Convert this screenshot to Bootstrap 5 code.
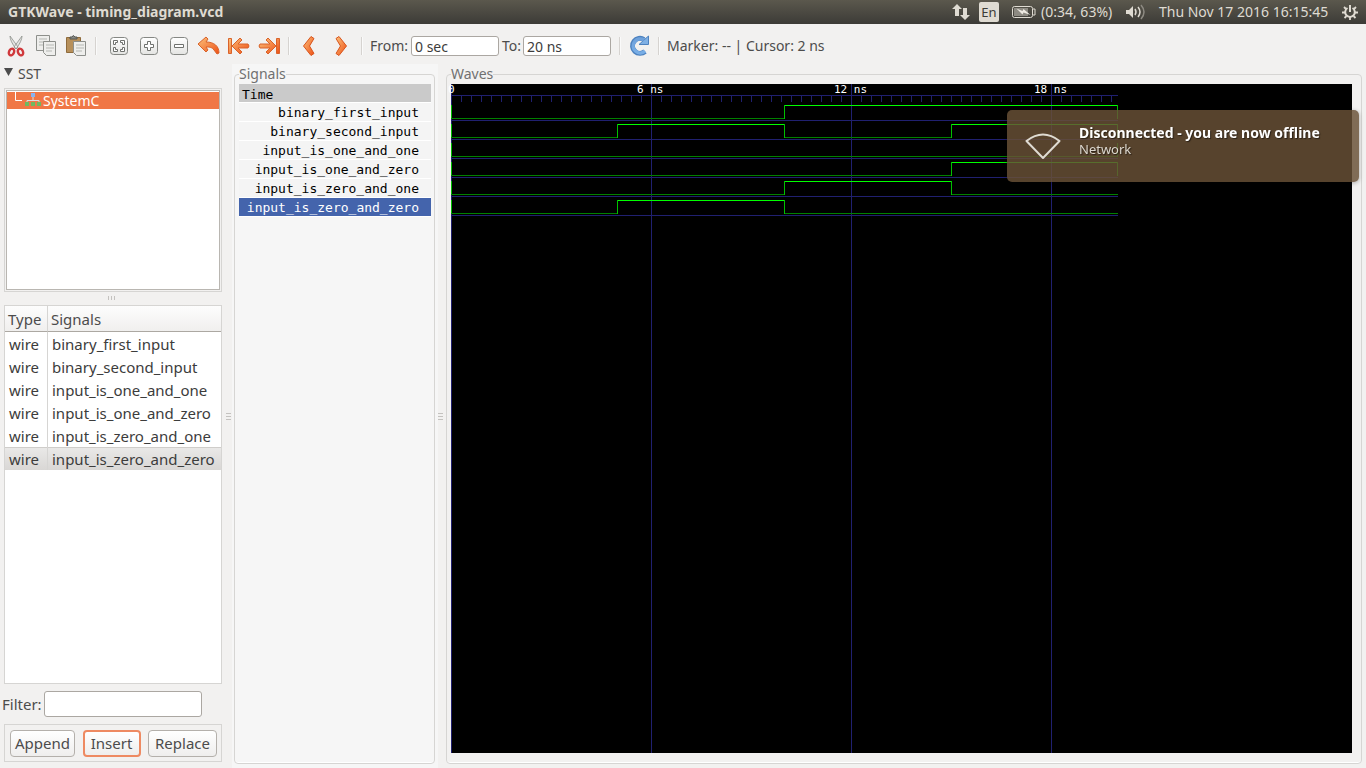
<!DOCTYPE html>
<html lang="en">
<head>
<meta charset="utf-8">
<meta name="viewport" content="width=device-width, initial-scale=1">
<title>GTKWave - timing_diagram.vcd</title>
<link href="https://cdn.jsdelivr.net/npm/bootstrap@5.3.0/dist/css/bootstrap.min.css" rel="stylesheet">
<style>
body{font-family:"Noto Sans","Open Sans",sans-serif;font-size:14px;line-height:20px;color:#4c4c4c;background:#f2f1f0}
svg{display:block;flex:none}
.topbar{height:24px;background:linear-gradient(#5b584d,#3c3b37);color:#dfdbd2}
.topbar h1{font-size:14px;line-height:24px}
.lang{width:20px;height:20px;background:#dfdbd2;color:#3c3b37;border-radius:2px;font-size:13px}
.charge{width:84px}
.clock{width:187px}
.toolbar{height:40px;padding-left:1px;padding-top:3px}
.tool{width:30px;height:30px;padding:0;border:0;background:none;display:flex;align-items:center;justify-content:center}
.tool.wide{width:32px}
.divider{width:1px;height:18px;background:#d6d3d0;box-shadow:1px 0 #fafafa}
.entry{border:1px solid #aba7a2;border-radius:3px;background:#fff;color:#3c3c3c;padding:0 3px;font-size:14px;line-height:18px}
.time-entry{width:88px;height:20px}
.filter-entry{width:158px;height:26px}
.from-label{width:41px}
.to-label{width:24px;padding-left:3px}
.side{width:222px;font-size:15px}
.sst{height:24px;padding-left:4px;gap:5px}
.sst span{font-size:14px}
.frame{border:1px solid #d6d5d3;margin-left:4px}
.tree{height:204px;padding:1px}
.tree-inner{border:1px solid #b9b6b1;background:#fff;padding-top:1px}
.tree-row{height:17px;background:#f07746;color:#fff;line-height:17px;padding-left:7px;font-size:14px}
.grip-h{height:13px}
.grip-v{width:10px;padding-left:4px}
.grip-v.narrow{width:8px;padding-left:0}
.sig-table{width:100%;table-layout:fixed;border-collapse:separate;border-spacing:0}
.sig-table th{height:26px;font-weight:400;padding:1px 3px 0;background:linear-gradient(#fdfdfd,#f0efee);border-bottom:1px solid #aca8a2}
.sig-table td{height:23px;padding:0 4px;color:#3c3c3c;white-space:nowrap}
.sig-table th:first-child,.sig-table td:first-child{width:43px;border-right:1px solid #d6d5d3}
.sig-table .picked td{background:linear-gradient(#eae9e8,#d9d7d5);box-shadow:inset 0 1px #cfcdca}
.filter-row{height:40px;padding-left:2px;gap:2px}
.actions{height:38px;padding:0 4px 0 5px;margin-bottom:6px}
.act{height:27px;border:1px solid #b4b0ab;border-radius:4px;background:linear-gradient(#fff,#efeeed);color:#4c4c4c;padding:0}
.act.focused{border:2px solid #ee8a62}
.w-append{width:65px}.w-insert{width:58px}.w-replace{width:69px}
.pane{background:#f6f6f6;padding:0 3px 4px 2px;width:206px}
.box{border:1px solid #d6d5d3;border-radius:4px;min-width:0;box-shadow:inset 0 -1px #fff}
.box legend{float:none;width:auto;margin:0;padding:0;font-size:14px;line-height:20px;color:#707070}
.pane .box{padding:0 3px 0 4px}
.names{font-family:"DejaVu Sans Mono",monospace;font-size:13px;color:#000}
.names li{height:19px;line-height:19px;padding:0 12px 0 3px;text-align:right;border-bottom:1px solid #fff;background:#f4f4f4}
.names .head{text-align:left;background:#cacaca;line-height:21px}
.names .current{background:#4464ac;color:#fff}
.wave-pane{padding:0 4px 4px 0}
.wave-pane .box{padding:0 9px 10px 4px}
.canvas{background:#000}
#waves{overflow:visible}
.axis{font-family:"DejaVu Sans Mono",monospace;font-size:11px;fill:#fff}
.notice{position:fixed;top:110px;right:7px;width:352px;height:72px;border-radius:5px;background:rgba(105,81,54,.83);box-shadow:0 1px 4px rgba(0,0,0,.3);color:#fff;padding:14px 0 0 18px;gap:18px;text-shadow:1px 1px 1px rgba(0,0,0,.5)}
.notice small{font-size:13px;line-height:14px;color:#dcd7ce}
.notice strong{line-height:18px}
</style>
</head>
<body class="vh-100 d-flex flex-column overflow-hidden">
<svg width="0" height="0" class="position-absolute" aria-hidden="true"><defs>
<linearGradient id="og" x1="0" y1="0" x2="1" y2="1"><stop offset="0" stop-color="#fbc27c"/><stop offset="1" stop-color="#ee4f14"/></linearGradient>
<linearGradient id="gg" x1="0" y1="0" x2="0" y2="1"><stop offset="0" stop-color="#fff"/><stop offset="1" stop-color="#e4e4e2"/></linearGradient>
<linearGradient id="bg" x1="0" y1="0" x2="0" y2="1"><stop offset="0" stop-color="#6ea1db"/><stop offset="1" stop-color="#79aee6"/></linearGradient>
</defs></svg>

<header class="topbar d-flex align-items-center flex-shrink-0">
<h1 class="fw-bold mb-0 ms-2 me-auto">GTKWave - timing_diagram.vcd</h1>
<svg width="20" height="18" viewBox="0 0 20 18" fill="#dfdbd2"><path d="M6 1l5 5H8v7H4V6H1zM14 17l-5-5h3V5h4v7h3z"/></svg>
<span class="lang d-flex align-items-center justify-content-center ms-2 me-2">En</span>
<svg class="ms-1 me-1" width="26" height="14" viewBox="0 0 26 14"><rect x="1.500" y="1.500" width="20" height="11" rx="2" fill="none" stroke="#dfdbd2"/><path d="M3 3h14v8H3z" fill="#8d8a82"/><path d="M22 4h2v6h-2" fill="none" stroke="#dfdbd2"/><path d="M5.500 3.500l6 2.500 1-2 7 6-7-2.500-1 2z" fill="#eeeae2"/></svg>
<span class="charge text-nowrap">(0:34, 63%)</span>
<svg class="me-2" width="22" height="18" viewBox="0 0 22 18" fill="none" stroke="#dfdbd2" stroke-width="1.500"><path d="M1 7h3l4-4v12l-4-4H1z" fill="#dfdbd2" stroke="none"/><path d="M10 6q2 3 0 6M13 4q4 5 0 10"/><path d="M16 2q6 7 0 14" stroke="#8d8a82"/></svg>
<span class="clock text-nowrap ps-1">Thu Nov 17 2016 16:15:45</span>
<svg class="me-2" width="16" height="16" viewBox="0 0 16 16" fill="none" stroke="#dfdbd2"><path d="M5.500 4a4.800 4.800 0 1 0 5 0M8 1v7" stroke-width="2"/><path d="M0 8.500h3M13 8.500h3M8 13v3M2 3l2 2M14 3l-2 2M2.500 14l2-2M13.500 14l-2-2" stroke-width="1.800"/></svg>
</header>

<nav class="toolbar d-flex align-items-start flex-shrink-0">
<div class="d-flex align-items-center pt-1 text-nowrap">
<button class="tool" aria-label="Cut"><svg width="20" height="24" viewBox="0 0 20 24"><path d="M4 2q0 5 6 13l2-2zM16 2q0 5-6 13l-2-2z" fill="#e3e3e1" stroke="#8d908c" stroke-width=".8"/><ellipse cx="5.500" cy="18" rx="2.500" ry="3.500" transform="rotate(25 5.500 18)" fill="none" stroke="#d0393c" stroke-width="2.400"/><ellipse cx="14.500" cy="18" rx="2.500" ry="3.500" transform="rotate(-25 14.500 18)" fill="none" stroke="#d0393c" stroke-width="2.400"/></svg></button>
<button class="tool" aria-label="Copy"><svg width="22" height="24" viewBox="0 0 22 24"><g fill="#eeeeec" stroke="#8d8f8b"><path d="M1.500 1.500h13v15h-13z"/><path d="M4 5h8M4 8h8M4 11h5" stroke="#b5b7b3"/><path d="M8.500 7.500h12v14h-9l-3-3z"/><path d="M11 11h8M11 14h8M11 17h6" stroke="#b5b7b3"/></g></svg></button>
<button class="tool" aria-label="Paste"><svg width="22" height="24" viewBox="0 0 22 24"><path d="M1.500 3.500h14v15h-14z" fill="#b7905b" stroke="#8f6b3c"/><path d="M5 5V3h2q1-3 3 0h2v2z" fill="#888a85" stroke="#555753"/><g fill="#eeeeec" stroke="#8d8f8b"><path d="M8.500 7.500h12v14h-9l-3-3z"/><path d="M11 11h8M11 14h8M11 17h6" stroke="#b5b7b3"/></g></svg></button>
<span class="divider ms-1 me-2"></span>
<button class="tool" aria-label="Zoom fit"><svg width="20" height="20" viewBox="0 0 20 20"><rect x="1.500" y="1.500" width="17" height="17" rx="3" fill="url(#gg)" stroke="#858783"/><path d="M4.500 8.500v-4h4v2h-2v2zM15.500 8.500v-4h-4v2h2v2zM4.500 11.500v4h4v-2h-2v-2zM15.500 11.500v4h-4v-2h2v-2z" fill="#fff" stroke="#6f716e"/></svg></button>
<button class="tool" aria-label="Zoom in"><svg width="20" height="20" viewBox="0 0 20 20"><rect x="1.500" y="1.500" width="17" height="17" rx="3" fill="url(#gg)" stroke="#858783"/><path d="M8.500 5.500h3v3h3v3h-3v3h-3v-3h-3v-3h3z" fill="#fff" stroke="#6f716e"/></svg></button>
<button class="tool" aria-label="Zoom out"><svg width="20" height="20" viewBox="0 0 20 20"><rect x="1.500" y="1.500" width="17" height="17" rx="3" fill="url(#gg)" stroke="#858783"/><path d="M5.500 8.500h9v3h-9z" fill="#fff" stroke="#6f716e"/></svg></button>
<button class="tool" aria-label="Zoom undo"><svg width="24" height="20" viewBox="0 0 24 20"><path d="M1 8l8-7 2 2-2 3c8 0 13 4 13 11l-2 1-3-4c-2-3-5-3-8-3l2 3-2 2z" fill="url(#og)" stroke="#d9622a" stroke-linejoin="round"/></svg></button>
<button class="tool" aria-label="Zoom to start"><svg width="24" height="20" viewBox="0 0 24 20"><path d="M1.500 2.500h3v15h-3zM5 10l8-8 2 2-4 4h10q2 2 0 4H11l4 4-2 2z" fill="url(#og)" stroke="#d9622a" stroke-linejoin="round"/></svg></button>
<button class="tool" aria-label="Zoom to end"><svg width="24" height="20" viewBox="0 0 24 20"><path d="M19.500 2.500h3v15h-3zM19 10l-8-8-2 2 4 4H3q-2 2 0 4h10l-4 4 2 2z" fill="url(#og)" stroke="#d9622a" stroke-linejoin="round"/></svg></button>
<span class="divider ms-1 me-1"></span>
<button class="tool wide" aria-label="Find previous edge"><svg width="14" height="22" viewBox="0 0 14 22"><path d="M1.500 11L9 1.500l3 2L7.500 11l4.500 7.500-3 2z" fill="url(#og)" stroke="#d9541c" stroke-linejoin="round"/></svg></button>
<button class="tool wide" aria-label="Find next edge"><svg width="14" height="22" viewBox="0 0 14 22"><path d="M12.500 11L5 1.500l-3 2L6.500 11 2 18.500l3 2z" fill="url(#og)" stroke="#d9541c" stroke-linejoin="round"/></svg></button>
<span class="divider ms-1 me-2"></span>
<label class="from-label" for="from">From:</label><input class="entry time-entry" id="from" value="0 sec">
<label class="to-label" for="to">To:</label><input class="entry time-entry" id="to" value="20 ns">
<span class="divider ms-2 me-1"></span>
<button class="tool" aria-label="Reload"><svg width="22" height="22" viewBox="0 0 22 22"><path d="M16 4.500a7.500 7.500 0 1 0 1 12" fill="none" stroke="#4d82bf" stroke-width="5"/><path d="M20.500 1v8.500H11z" fill="#7fb0e4" stroke="#4d82bf"/><path d="M16 5a7 7 0 1 0 1 11" fill="none" stroke="url(#bg)" stroke-width="3.500"/></svg></button>
<span class="divider ms-1 me-2"></span>
<span>Marker: -- | Cursor: 2 ns</span>
</div>
</nav>

<main class="d-flex flex-grow-1 align-items-stretch overflow-hidden">
<aside class="side d-flex flex-column flex-shrink-0">
<div class="sst d-flex align-items-start"><svg class="mt-1" width="9" height="9" viewBox="0 0 9 9"><path d="M0 0h9L4.500 8z" fill="#4c4c4c"/></svg><span>SST</span></div>
<div class="frame tree flex-shrink-0"><div class="tree-inner h-100"><div class="tree-row d-flex align-items-center">
<svg width="29" height="17" viewBox="0 0 29 17"><path d="M1.500 0v8.500H8" fill="none" stroke="#fff"/><path d="M19 5v3M13 11V8.500h12V11" fill="none" stroke="#ddd"/><path d="M17 1h4v4h-4z" fill="#8ab4f0"/><path d="M11 10h4v4h-4zM17 10h4v4h-4zM23 10h4v4h-4z" fill="#70b860"/></svg><span>SystemC</span></div></div></div>
<div class="grip-h d-flex align-items-center justify-content-center"><svg width="9" height="5"><path d="M1.500 0v4M4.500 0v4M7.500 0v4" stroke="#c4c2bf"/></svg></div>
<div class="frame bg-white flex-grow-1">
<table class="sig-table"><thead><tr><th>Type</th><th>Signals</th></tr></thead><tbody>
<tr><td>wire</td><td>binary_first_input</td></tr>
<tr><td>wire</td><td>binary_second_input</td></tr>
<tr><td>wire</td><td>input_is_one_and_one</td></tr>
<tr><td>wire</td><td>input_is_one_and_zero</td></tr>
<tr><td>wire</td><td>input_is_zero_and_one</td></tr>
<tr class="picked"><td>wire</td><td>input_is_zero_and_zero</td></tr>
</tbody></table></div>
<div class="filter-row d-flex align-items-center flex-shrink-0"><label for="filter">Filter:</label><input class="entry filter-entry" id="filter"></div>
<div class="frame actions d-flex align-items-center justify-content-between flex-shrink-0"><button class="act w-append">Append</button><button class="act focused w-insert">Insert</button><button class="act w-replace">Replace</button></div>
</aside>
<div class="grip-v d-flex align-items-center flex-shrink-0"><svg width="5" height="9"><path d="M0 1.500h5M0 4.500h5M0 7.500h5" stroke="#c4c2bf"/></svg></div>
<div class="pane d-flex flex-shrink-0">
<fieldset class="box flex-grow-1"><legend>Signals</legend>
<ul class="names list-unstyled mb-0"><li class="head">Time</li><li>binary_first_input</li><li>binary_second_input</li><li>input_is_one_and_one</li><li>input_is_one_and_zero</li><li>input_is_zero_and_one</li><li class="current">input_is_zero_and_zero</li></ul>
</fieldset></div>
<div class="grip-v narrow d-flex align-items-center flex-shrink-0"><svg width="5" height="9"><path d="M0 1.500h5M0 4.500h5M0 7.500h5" stroke="#c4c2bf"/></svg></div>
<div class="wave-pane d-flex flex-grow-1 overflow-hidden">
<fieldset class="box flex-grow-1 d-flex flex-column"><legend>Waves</legend>
<div class="canvas flex-grow-1 h-100"><svg id="waves" width="668" height="100%" shape-rendering="crispEdges"></svg></div>
</fieldset></div>
</main>

<div class="notice d-flex" role="status">
<svg class="mt-2" width="36" height="30" viewBox="0 0 36 30"><path d="M1.500 9Q18-4 34.500 9L18 26z" fill="none" stroke="#dfdbd2" stroke-width="2" stroke-linejoin="round"/></svg>
<div class="d-flex flex-column"><strong>Disconnected - you are now offline</strong><small>Network</small></div>
</div>

<script src="https://cdn.jsdelivr.net/npm/bootstrap@5.3.0/dist/js/bootstrap.bundle.min.js"></script>
<script>
// Timeline: 20 ns over 667 px, one row of 19 px for each signal.
const END = 667, ROW = 19, X = [0, 166, 333, 500, 667];
const levels = [[0,0,1,1],[0,1,0,1],[0,0,0,0],[0,0,0,1],[0,0,1,0],[0,1,0,0]];
let out = '';
const line = (x1, y1, x2, y2, c) => { out += `<line x1="${x1}" y1="${y1}" x2="${x2}" y2="${y2}" stroke="${c}"/>`; };
const h = (a, b, y, c) => line(a, y + .5, b, y + .5, c), v = (x, a, b, c) => line(x + .5, a, x + .5, b, c);
h(0, END, 11, '#202070');
for (let x = 10; x < END; x += 10) if (x % 200) v(x, 12, 18, '#202070');
for (let x = 0; x < END; x += 200) v(x, 0, '100%', '#202070');
levels.forEach((row, i) => {
  const top = 21 + i * ROW, low = top + 13;
  h(0, END, low + 2, '#202070');
  v(0, top, low, '#00c000');
  row.forEach((bit, k) => {
    h(X[k], X[k + 1], bit ? top : low, bit ? '#00ff00' : '#008000');
    if (k && bit !== row[k - 1]) v(X[k], top, low + 1, '#00c000');
  });
  if (i < 4) v(END - 1, top, low + 1, '#00c000');
});
[['0', -3], ['6 ns', 186], ['12 ns', 383], ['18 ns', 583]].forEach(([t, x]) => { out += `<text class="axis" x="${x}" y="9">${t}</text>`; });
document.getElementById('waves').innerHTML = out;
</script>
</body>
</html>
